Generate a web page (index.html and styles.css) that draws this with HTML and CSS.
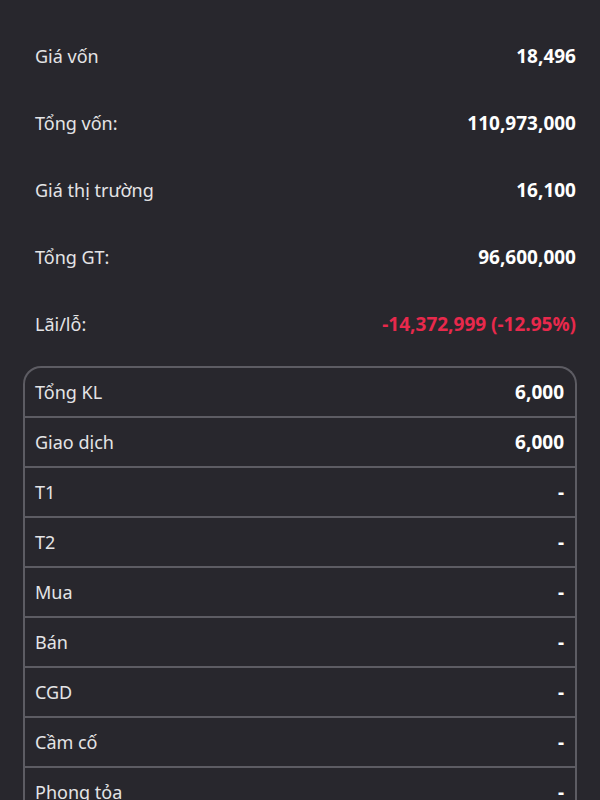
FILE: index.html
```html
<!DOCTYPE html>
<html lang="vi">
<head>
    <meta charset="UTF-8">
    <title>Chi tiết mã</title>
    <link rel="stylesheet" href="styles.css">
</head>
<body>

<div class="summary">
    <div class="sum-row"><span class="label">Giá vốn</span><span class="value">18,496</span></div>
    <div class="sum-row"><span class="label">Tổng vốn:</span><span class="value">110,973,000</span></div>
    <div class="sum-row"><span class="label">Giá thị trường</span><span class="value">16,100</span></div>
    <div class="sum-row"><span class="label">Tổng GT:</span><span class="value">96,600,000</span></div>
    <div class="sum-row"><span class="label">Lãi/lỗ:</span><span class="value loss">-14,372,999 (-12.95%)</span></div>
</div>

<div class="vol-table">
    <div class="vol-row"><span class="label">Tổng KL</span><span class="value">6,000</span></div>
    <div class="vol-row"><span class="label">Giao dịch</span><span class="value">6,000</span></div>
    <div class="vol-row"><span class="label">T1</span><span class="value">-</span></div>
    <div class="vol-row"><span class="label">T2</span><span class="value">-</span></div>
    <div class="vol-row"><span class="label">Mua</span><span class="value">-</span></div>
    <div class="vol-row"><span class="label">Bán</span><span class="value">-</span></div>
    <div class="vol-row"><span class="label">CGD</span><span class="value">-</span></div>
    <div class="vol-row"><span class="label">Cầm cố</span><span class="value">-</span></div>
    <div class="vol-row"><span class="label">Phong tỏa</span><span class="value">-</span></div>
</div>

</body>
</html>
```

FILE: styles.css
```css
:root {
    --bg: #28272d;
    --line: #5d5c63;
    --text: #e4e4e6;
    --loss: #e8294c;
}

body {
    background: var(--bg);
    color: var(--text);
    font-family: 'Noto Sans', sans-serif;
    font-size: 18px;
    margin: 0;
    padding-top: 22px;
}

.summary { padding: 0 24px 0 35px; }

.sum-row {
    height: 67px;
    display: flex;
    justify-content: space-between;
    align-items: center;
}

.value { color: #fff; font-weight: bold; font-size: 19px; }
.value.loss { color: var(--loss); }

.vol-table {
    margin: 9px 23px 0 23px;
    border: 2px solid var(--line);
    border-bottom: none;
    border-radius: 18px 18px 0 0;
}

.vol-row {
    height: 48px;
    display: flex;
    justify-content: space-between;
    align-items: center;
    padding: 0 11px 0 10px;
    border-bottom: 2px solid var(--line);
}
```
